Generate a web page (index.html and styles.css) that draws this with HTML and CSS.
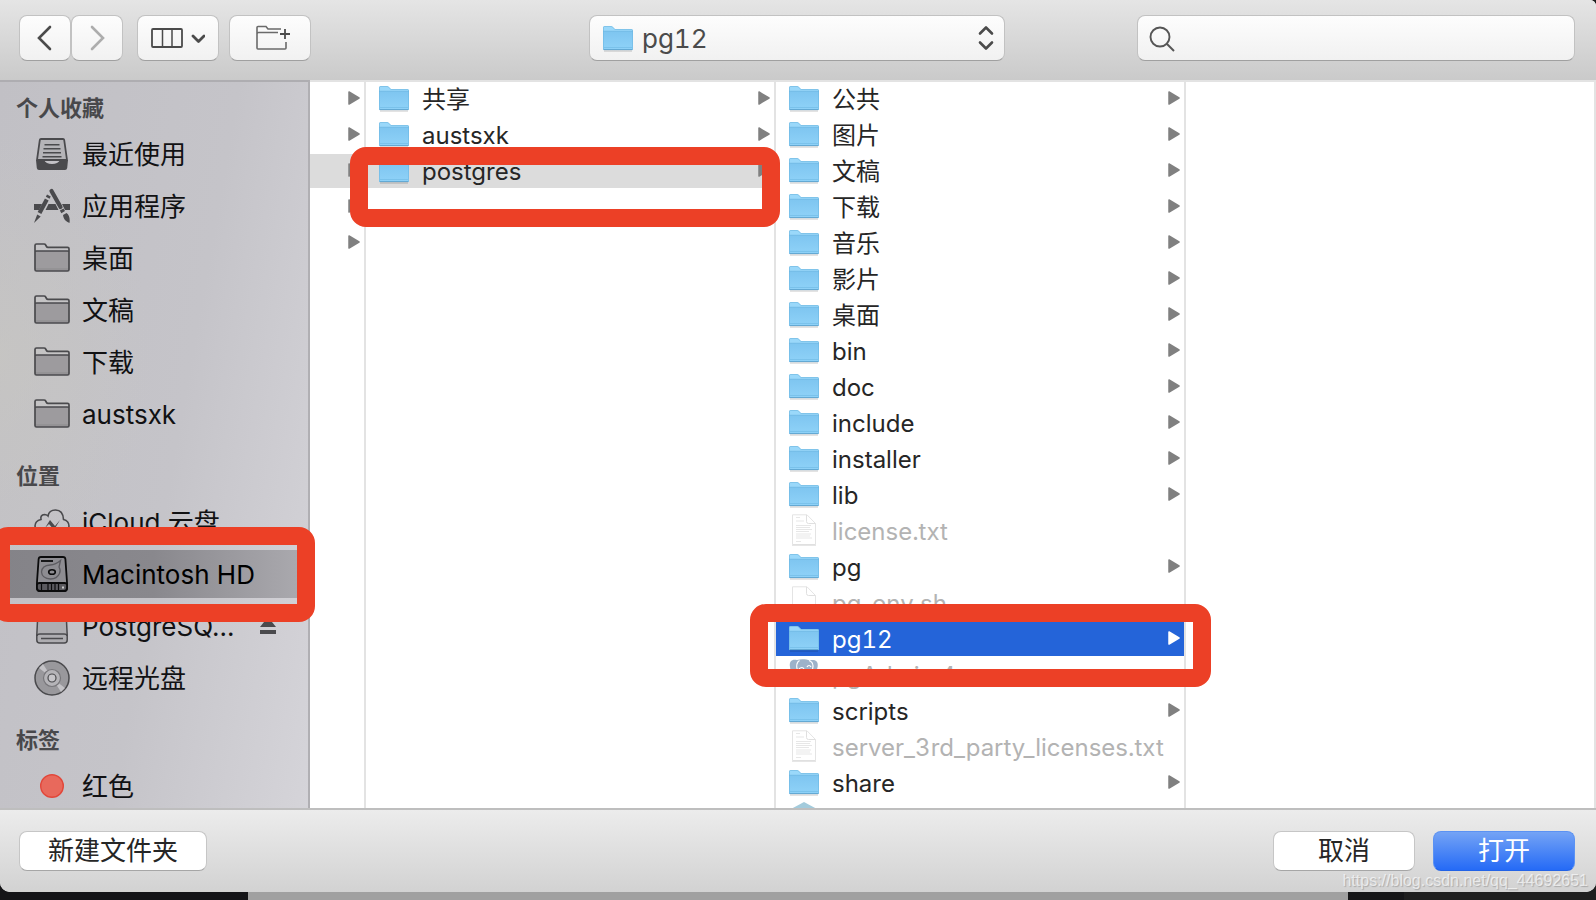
FILE: index.html
```
<!DOCTYPE html>
<html lang="zh-CN">
<head>
    <meta charset="UTF-8">
    <meta name="viewport" content="width=device-width, initial-scale=1.0">
    <title>pg12</title>
    <link rel="stylesheet" href="styles.css">
</head>
<body>
    <!-- shared icons -->
    <svg class="defs" aria-hidden="true">
        <defs>
            <linearGradient id="blue" x1="0" y1="0" x2="0" y2="1">
                <stop offset="0" stop-color="#7ec5f0"/>
                <stop offset="1" stop-color="#8fd2f8"/>
            </linearGradient>
        </defs>
        <symbol id="folder" viewBox="0 0 30 34">
            <path d="M1 29h28" stroke="#000" stroke-opacity=".15" stroke-width="1.5"/>
            <path d="M0 5.5Q0 4 1.500 4H8q1 0 1.700 .8L12 7h16.500Q30 7 30 8.500V27q0 1-1 1H1q-1 0-1-1z" fill="#9ad8fa"/>
            <path d="M0 9h30v18q0 1-1 1H1q-1 0-1-1z" fill="url(#blue)"/>
            <path d="M.5 9V5.500Q.5 4.500 1.500 4.500H8q1 0 1.700 .8L12 7.500h16.500q1 0 1 1V9M0 9.200h30" fill="none" stroke="#6bb4dd" stroke-opacity=".7" stroke-width=".8"/>
            <path d="M.5 9v18M29.500 9v18M1 25.500h28" stroke="#68b3df" stroke-opacity=".5"/>
            <path d="M.5 27.600h29" stroke="#5a9fc9" stroke-width=".9"/>
        </symbol>
        <symbol id="doc" viewBox="0 0 30 34">
            <path d="M3.500 .8H18l8.500 8.700V30.500h-23z" fill="#fff" stroke="#e4e4e4"/>
            <path d="M17.500 1v6.500q0 2 2 2h7" fill="none" stroke="#e0e0e0"/>
            <path d="M3 31.300h24" stroke="#ccc" stroke-opacity=".6"/>
        </symbol>
        <symbol id="doc-text" viewBox="0 0 30 34">
            <use href="#doc"/>
            <path d="M7 3.500h4M7 7h8M7 11.500h15M7 13.500h14M7 15.500h16M7 17.500h13M7 20h15M7 22h14M7 24h16M7 27.500h5" stroke="#e4e4e4" stroke-width=".9"/>
        </symbol>
        <symbol id="elephant" viewBox="0 0 30 34">
            <path d="M8 2C3 1 0 3 1 9c.6 4 2 9 5 10 1.600 .5 2.500-1 4-2 2 1 5 1 7 0l1 8c.5 4 5 4 5.500 0L24 17c4-3 6-10 4-13-1.500-2-4-2.500-7-1.500C17 1 12 .6 8 2z" fill="#9db2c9"/>
            <path d="M10.500 2.500C8 4 7 8 8.500 13M20 2.500c3 1 5 4 3.500 9M10 11c2-2 4-2 5 0M18 9c1-2 3-2 4 0" fill="none" stroke="#fff" stroke-width="1.200"/>
        </symbol>
        <symbol id="arrow" viewBox="0 0 12 14">
            <path d="M1 1l10 6-10 6z" fill="currentColor" stroke="currentColor" stroke-width="1.500" stroke-linejoin="round"/>
        </symbol>
        <symbol id="side-folder" viewBox="0 0 36 36">
            <path d="M1 11h34v18.500q0 1.500-1.500 1.500h-31Q1 31 1 29.500z" fill="#9d9b9e"/>
            <path d="M1 29h34" stroke="#8b8a8c"/>
            <path d="M1 29.500V5.500Q1 4 2.500 4H10q1.200 0 1.700 1l.8 1.500q.4 .8 1.500 .8h19.500Q35 7.300 35 8.800v20.700q0 1.500-1.500 1.500h-31Q1 31 1 29.500zM1 12q0-1 1.500-1h31q1.500 0 1.500 1" fill="none" stroke="#4a4a4d" stroke-width="1.700"/>
        </symbol>
    </svg>

    <div class="dialog">
        <header class="toolbar">
            <div class="tools">
                <div class="nav-buttons">
                    <button class="tool" aria-label="后退">
                        <svg width="16" height="26" viewBox="0 0 16 26"><path d="M13 2L2 13l11 11" fill="none" stroke="#4b4b4b" stroke-width="2.600" stroke-linecap="round"/></svg>
                    </button>
                    <button class="tool" aria-label="前进">
                        <svg width="16" height="26" viewBox="0 0 16 26"><path d="M3 2l11 11L3 24" fill="none" stroke="#adadad" stroke-width="2.600" stroke-linecap="round"/></svg>
                    </button>
                </div>
                <button class="tool wide" aria-label="显示">
                    <svg width="54" height="22" viewBox="0 0 54 22" fill="none" stroke="#4b4b4b">
                        <rect x="1" y="2" width="30" height="18" rx="1" stroke-width="1.800"/>
                        <path d="M11.500 2v18M21 2v18" stroke-width="1.500"/>
                        <path d="M42 9l5.500 5.500L53 9" stroke-width="2.800" stroke-linecap="round" stroke-linejoin="round"/>
                    </svg>
                </button>
                <button class="tool wide" aria-label="新建文件夹">
                    <svg class="add-folder" width="34" height="26" viewBox="0 0 34 26" fill="none" stroke="#6a6a6a" stroke-width="1.600">
                        <path d="M25 4H12L10 1.500H2Q1 1.500 1 2.500V23q0 1 1 1h27q1 0 1-1v-6M1 9q0-1.500 1.500-1.500H22"/>
                        <path d="M29 4v10M24 9h10" stroke="#4b4b4b" stroke-width="1.800"/>
                    </svg>
                </button>
            </div>
            <div class="location">
                <svg class="location-icon" width="30" height="34"><use href="#folder"/></svg>
                <select aria-label="位置">
                    <option>pg12</option>
                </select>
                <svg class="location-arrows" width="16" height="26" viewBox="0 0 16 26" fill="none" stroke="#4b4b4b" stroke-width="2.600" stroke-linecap="round" stroke-linejoin="round"><path d="M2 8.500L8 2.500l6 6M2 17.500l6 6 6-6"/></svg>
            </div>
            <div class="search">
                <svg class="search-icon" width="26" height="26" viewBox="0 0 26 26" fill="none" stroke="#555"><circle cx="11" cy="11" r="9.500" stroke-width="1.900"/><path d="M18 18l7 7" stroke-width="2"/></svg>
                <input type="search" aria-label="搜索">
            </div>
        </header>

        <main class="browser">
            <nav class="sidebar">
                <h2>个人收藏</h2>
                <a href="#">
                    <svg viewBox="0 0 36 36">
                        <path d="M7 3h22q1 0 1.200 1L33 24H3L5.800 4Q6 3 7 3z" fill="#b5b4b8" stroke="#4a4a4d" stroke-width="1.800" stroke-linejoin="round"/>
                        <path d="M10.500 8.700h15M9.500 12.700h17M9 16.700h18M8.500 20.700h19" stroke="#4a4a4d" stroke-width="1.500"/>
                        <path d="M2 24h8q2 4 8 4t8-4h8l-.8 8q-.3 2-2.200 2H5q-1.900 0-2.200-2z" fill="#4a4a4d"/>
                    </svg>
                    <span>最近使用</span>
                </a>
                <a href="#">
                    <svg viewBox="0 0 36 36">
                        <path d="M0 16h8l-3 6H0zM14.500 16h7l3 6H11.500zM28 16h8v6h-5z" fill="#4a4a4d"/>
                        <g stroke="#4a4a4d" stroke-width="4.200" fill="none">
                            <path d="M17.500 3l9 16" stroke-linecap="round"/>
                            <path d="M14.900 7.500l-1.200 2.300M12.800 11.500L5.500 25"/>
                            <path d="M27.700 21.500l1.500 2.600"/>
                        </g>
                        <path d="M3.200 26.500l3.500 2L0 35zM29 27l3.500-2q4 3 3 10l-2-1q-4-2-4.500-7z" fill="#4a4a4d"/>
                    </svg>
                    <span>应用程序</span>
                </a>
                <a href="#"><svg><use href="#side-folder"/></svg><span>桌面</span></a>
                <a href="#"><svg><use href="#side-folder"/></svg><span>文稿</span></a>
                <a href="#"><svg><use href="#side-folder"/></svg><span>下载</span></a>
                <a href="#"><svg><use href="#side-folder"/></svg><span>austsxk</span></a>

                <h2>位置</h2>
                <a href="#">
                    <svg viewBox="0 0 36 36" fill="none" stroke="#4a4a4d" stroke-width="1.600">
                        <path d="M9 29q-8 0-8-7 0-5 6-6.500Q6 11 10.500 10.500q2 0 3.500 1.500Q15 6 21.500 6 29 6 29.500 15.500 35 17 35 22q0 7-8 7z"/>
                        <path d="M11 24l5-8 5 6 5-6-6 10-5-6z" fill="#4a4a4d" stroke="none"/>
                    </svg>
                    <span>iCloud 云盘</span>
                </a>
                <a href="#" class="active">
                    <svg viewBox="0 0 36 36" fill="none" stroke="#0b0b0c" stroke-width="1.800">
                        <path d="M7 1h22q2.200 0 2.400 2.200L33 26v6q0 3-3 3H6q-3 0-3-3v-6L4.600 3.200Q4.800 1 7 1z" fill="#8d8c91"/>
                        <path d="M3 29q0-2 2.500-2h25q2.500 0 2.500 2v3q0 3-3 3H6q-3 0-3-3z" fill="#5b5a5f"/>
                        <path d="M7 5h12"/>
                        <path d="M26.500 4.500L25 11q2 3 .5 6.500Q23 23 16.500 23 8 22.500 7.500 16 8 9.500 16 9q6-.5 10.500-4.500z" stroke="#5c5b60" stroke-width="1.300"/>
                        <ellipse cx="18" cy="16" rx="3.300" ry="2.300" stroke-width="1.600"/>
                        <path d="M7.500 28v6M14 28v6M17.500 28v6M21 28v6M24.500 28v6" stroke-width="1.200"/>
                        <path d="M28 31.500h2" stroke="#ccc"/>
                    </svg>
                    <span>Macintosh HD</span>
                </a>
                <div class="volume">
                    <a href="#">
                        <svg viewBox="0 0 36 36" fill="none" stroke="#4a4a4d" stroke-width="1.500">
                            <path d="M6 1h24q2 0 2 2l1.200 24v5q0 3-3 3H5.800q-3 0-3-3v-5L4 3q0-2 2-2z" fill="#aeadb1"/>
                            <path d="M3 28q0-2 3-2h24q3 0 3 2M7 30.500h22"/>
                        </svg>
                        <span>PostgreSQ...</span>
                    </a>
                    <button class="eject" aria-label="推出">
                        <svg width="16" height="18" viewBox="0 0 16 18" fill="#4a4a4d"><path d="M8 0l8 10H0zM0 13h16v4H0z"/></svg>
                    </button>
                </div>
                <a href="#">
                    <svg viewBox="0 0 36 36" fill="none" stroke="#4a4a4d" stroke-width="1.500">
                        <circle cx="18" cy="18" r="17" fill="#99989c"/>
                        <path d="M18 18L5 8l4-4zM18 18l13 10-4 4z" fill="#c3c2c6" stroke="none"/>
                        <circle cx="18" cy="18" r="8.500" fill="#b5b4b8" stroke="#77767a" stroke-width="1.200"/>
                        <circle cx="18" cy="18" r="4" fill="#c6c5c9" stroke-width="1.200"/>
                    </svg>
                    <span>远程光盘</span>
                </a>

                <h2>标签</h2>
                <a href="#">
                    <svg viewBox="0 0 36 36"><circle cx="18" cy="18" r="11.300" fill="#e8695c" stroke="#e2473a" stroke-width="1.400"/></svg>
                    <span>红色</span>
                </a>
            </nav>

            <ul class="column narrow">
                <li><a href="#" aria-label="1"><svg class="arrow"><use href="#arrow"/></svg></a></li>
                <li><a href="#" aria-label="2"><svg class="arrow"><use href="#arrow"/></svg></a></li>
                <li class="open"><a href="#" aria-label="3"><svg class="arrow"><use href="#arrow"/></svg></a></li>
                <li><a href="#" aria-label="4"><svg class="arrow"><use href="#arrow"/></svg></a></li>
                <li><a href="#" aria-label="5"><svg class="arrow"><use href="#arrow"/></svg></a></li>
            </ul>

            <ul class="column">
                <li><a href="#"><svg class="icon"><use href="#folder"/></svg><span>共享</span><svg class="arrow"><use href="#arrow"/></svg></a></li>
                <li><a href="#"><svg class="icon"><use href="#folder"/></svg><span>austsxk</span><svg class="arrow"><use href="#arrow"/></svg></a></li>
                <li class="open"><a href="#"><svg class="icon"><use href="#folder"/></svg><span>postgres</span><svg class="arrow"><use href="#arrow"/></svg></a></li>
            </ul>

            <ul class="column">
                <li><a href="#"><svg class="icon"><use href="#folder"/></svg><span>公共</span><svg class="arrow"><use href="#arrow"/></svg></a></li>
                <li><a href="#"><svg class="icon"><use href="#folder"/></svg><span>图片</span><svg class="arrow"><use href="#arrow"/></svg></a></li>
                <li><a href="#"><svg class="icon"><use href="#folder"/></svg><span>文稿</span><svg class="arrow"><use href="#arrow"/></svg></a></li>
                <li><a href="#"><svg class="icon"><use href="#folder"/></svg><span>下载</span><svg class="arrow"><use href="#arrow"/></svg></a></li>
                <li><a href="#"><svg class="icon"><use href="#folder"/></svg><span>音乐</span><svg class="arrow"><use href="#arrow"/></svg></a></li>
                <li><a href="#"><svg class="icon"><use href="#folder"/></svg><span>影片</span><svg class="arrow"><use href="#arrow"/></svg></a></li>
                <li><a href="#"><svg class="icon"><use href="#folder"/></svg><span>桌面</span><svg class="arrow"><use href="#arrow"/></svg></a></li>
                <li><a href="#"><svg class="icon"><use href="#folder"/></svg><span>bin</span><svg class="arrow"><use href="#arrow"/></svg></a></li>
                <li><a href="#"><svg class="icon"><use href="#folder"/></svg><span>doc</span><svg class="arrow"><use href="#arrow"/></svg></a></li>
                <li><a href="#"><svg class="icon"><use href="#folder"/></svg><span>include</span><svg class="arrow"><use href="#arrow"/></svg></a></li>
                <li><a href="#"><svg class="icon"><use href="#folder"/></svg><span>installer</span><svg class="arrow"><use href="#arrow"/></svg></a></li>
                <li><a href="#"><svg class="icon"><use href="#folder"/></svg><span>lib</span><svg class="arrow"><use href="#arrow"/></svg></a></li>
                <li class="disabled"><a href="#"><svg class="icon"><use href="#doc-text"/></svg><span>license.txt</span></a></li>
                <li><a href="#"><svg class="icon"><use href="#folder"/></svg><span>pg</span><svg class="arrow"><use href="#arrow"/></svg></a></li>
                <li class="disabled"><a href="#"><svg class="icon"><use href="#doc"/></svg><span>pg_env.sh</span></a></li>
                <li class="selected"><a href="#"><svg class="icon"><use href="#folder"/></svg><span>pg12</span><svg class="arrow"><use href="#arrow"/></svg></a></li>
                <li class="disabled"><a href="#"><svg class="icon"><use href="#elephant"/></svg><span>pgAdmin 4</span></a></li>
                <li><a href="#"><svg class="icon"><use href="#folder"/></svg><span>scripts</span><svg class="arrow"><use href="#arrow"/></svg></a></li>
                <li class="disabled"><a href="#"><svg class="icon"><use href="#doc-text"/></svg><span>server_3rd_party_licenses.txt</span></a></li>
                <li><a href="#"><svg class="icon"><use href="#folder"/></svg><span>share</span><svg class="arrow"><use href="#arrow"/></svg></a></li>
                <li><svg class="icon" viewBox="0 0 30 34"><path d="M15 0l13 7v16l-13 8-13-8V7z" fill="#a3cbdc"/></svg></li>
            </ul>

            <div class="column last"></div>
        </main>

        <footer class="actions">
            <button class="btn new-folder">新建文件夹</button>
            <button class="btn">取消</button>
            <button class="btn primary">打开</button>
        </footer>

        <!-- red boxes drawn over the three clicks -->
        <div class="mark mark-disk"></div>
        <div class="mark mark-user"></div>
        <div class="mark mark-folder"></div>
    </div>
    <div class="watermark">https://blog.csdn.net/qq_44692651</div>
</body>
</html>
```
FILE: styles.css
```
* {
    box-sizing: border-box;
}

body {
    margin: 0;
    height: 100vh;
    padding-bottom: 8px;
    position: relative;
    overflow: hidden;
    font-family: Inter, "Noto Sans CJK SC", sans-serif;
    color: #262626;
    background: linear-gradient(90deg, #141417 248px, #a0a0a0 248px, #a0a0a0 calc(100% - 248px), #161618 calc(100% - 248px), #161618 calc(100% - 192px), #1f1f1f calc(100% - 192px));
}

.defs {
    position: absolute;
    width: 0;
    height: 0;
}

a {
    color: inherit;
    text-decoration: none;
}

button, select, input {
    font-family: inherit;
    margin: 0;
}

.dialog {
    position: relative;
    display: flex;
    flex-direction: column;
    height: 100%;
    overflow: hidden;
    border-radius: 0 6px 10px 10px;
    background: #fff;
}

/* toolbar */
.toolbar {
    display: grid;
    grid-template-columns: 1fr 416px 1fr;
    align-items: start;
    height: 80px;
    flex-shrink: 0;
    padding: 15px 21px 0 19px;
    background: linear-gradient(#e5e5e5, #cacaca);
}

.tools {
    display: flex;
    gap: 10px;
}

.nav-buttons {
    display: flex;
    gap: 0;
    margin-right: 4px;
}

.tool, .location select, .search input {
    height: 46px;
    border: 1px solid #c2c2c2;
    border-bottom-color: #a0a0a0;
    border-radius: 8px;
    background: linear-gradient(#fdfdfd, #f1f1f1);
}

.tool {
    display: flex;
    align-items: center;
    justify-content: center;
    width: 52px;
    padding: 0;
}

.tool.wide {
    width: 82px;
}

.add-folder {
    margin-left: 6px;
}

.location, .search {
    position: relative;
}

.location select {
    appearance: none;
    width: 100%;
    padding: 0 52px;
    font-size: 26px;
    font-variant-numeric: tabular-nums;
    color: #4b4b4b;
}

.location-icon {
    position: absolute;
    left: 14px;
    top: 7px;
}

.location-arrows {
    position: absolute;
    right: 11px;
    top: 10px;
}

.search {
    width: 438px;
    justify-self: end;
}

.search input {
    appearance: none;
    width: 100%;
    padding: 0 12px 0 48px;
    font-size: 26px;
}

.search-icon {
    position: absolute;
    left: 12px;
    top: 11px;
}

/* file browser */
.browser {
    display: flex;
    flex: 1;
    min-height: 0;
    border-bottom: 2px solid #bebebe;
}

.sidebar {
    display: flex;
    flex-direction: column;
    width: 310px;
    flex-shrink: 0;
    overflow: hidden;
    border-top: 2px solid #aeadb1;
    border-right: 2px solid #b0afb3;
    background: radial-gradient(ellipse at 0 38%, rgba(200, 199, 193, 0.6), rgba(200, 199, 193, 0) 35%), linear-gradient(100deg, #c1c0c5 0%, #c5c4c9 55%, #d5d4d9 100%);
}

.sidebar > * {
    flex-shrink: 0;
}

.sidebar h2 {
    margin: 0;
    padding: 16px 0 0 16px;
    font-size: 22px;
    font-weight: 600;
    line-height: 40px;
    color: #48484b;
}

.sidebar h2:first-child {
    padding-top: 6px;
}

.sidebar a {
    display: flex;
    align-items: center;
    gap: 12px;
    height: 48px;
    margin: 2px 0;
    padding-left: 34px;
    font-size: 26px;
    line-height: 50px;
    white-space: nowrap;
    color: #111113;
}

.sidebar a svg {
    width: 36px;
    height: 36px;
}

.sidebar a.active {
    color: #000;
    background: linear-gradient(90deg, #848388, #89888d 50%, #acabb0);
}

.sidebar a span {
    padding-top: 2px;
}

.volume {
    display: flex;
    align-items: center;
    justify-content: space-between;
    padding-right: 32px;
}

.eject {
    display: flex;
    padding: 0;
    border: 0;
    background: none;
}

.column {
    width: 410px;
    flex-shrink: 0;
    margin: 0;
    padding: 0;
    overflow: hidden;
    list-style: none;
    border-top: 2px solid #e3e3e3;
    border-right: 2px solid #e3e3e3;
}

.column.narrow {
    width: 56px;
}

.column.last {
    flex: 1;
}

.column li {
    height: 34px;
    margin-bottom: 2px;
    padding: 0 4px 0 13px;
}

.column a {
    display: flex;
    align-items: center;
    height: 34px;
    font-size: 24px;
    font-variant-numeric: tabular-nums;
    line-height: 34px;
    white-space: nowrap;
}

.column span {
    padding-top: 2px;
}

.icon {
    width: 30px;
    height: 34px;
    margin-right: 13px;
}

.arrow {
    width: 12px;
    height: 14px;
    margin: 0 0 2px auto;
    color: #808080;
}

.column .open {
    background: #dcdcdc;
}

.column .disabled {
    color: #b3b3b3;
}

.column .selected {
    color: #fff;
    background: #2464d9;
}

.selected .arrow {
    color: #fff;
}

/* bottom bar */
.actions {
    display: flex;
    align-items: flex-start;
    gap: 18px;
    height: 82px;
    flex-shrink: 0;
    padding: 21px 21px 0 19px;
    background: linear-gradient(#ececec, #d2d2d2);
}

.btn {
    width: 142px;
    height: 40px;
    padding: 0;
    border: 1px solid #c6c6c6;
    border-bottom-color: #a6a6a6;
    border-radius: 8px;
    background: #fff;
    font-size: 26px;
    line-height: 38px;
    color: #262626;
}

.new-folder {
    width: 188px;
    margin-right: auto;
}

.btn.primary {
    color: #fff;
    border-color: #5b92f3;
    border-bottom-color: #2263e6;
    background: linear-gradient(#74a3f5, #256af6);
}

/* overlays */
.mark {
    position: absolute;
    border: 18px solid #ec4026;
    border-radius: 16px;
}

.mark-disk {
    left: -8px;
    top: 527px;
    width: 323px;
    height: 95px;
}

.mark-user {
    left: 350px;
    top: 147px;
    width: 430px;
    height: 80px;
}

.mark-folder {
    left: 750px;
    top: 604px;
    width: 461px;
    height: 83px;
}

.watermark {
    position: absolute;
    right: 8px;
    bottom: 10px;
    font-family: "Liberation Sans", sans-serif;
    font-size: 16px;
    line-height: 18px;
    color: rgba(255, 255, 255, 0.65);
    text-shadow: 1px 1px 1px rgba(0, 0, 0, 0.2);
}
```
